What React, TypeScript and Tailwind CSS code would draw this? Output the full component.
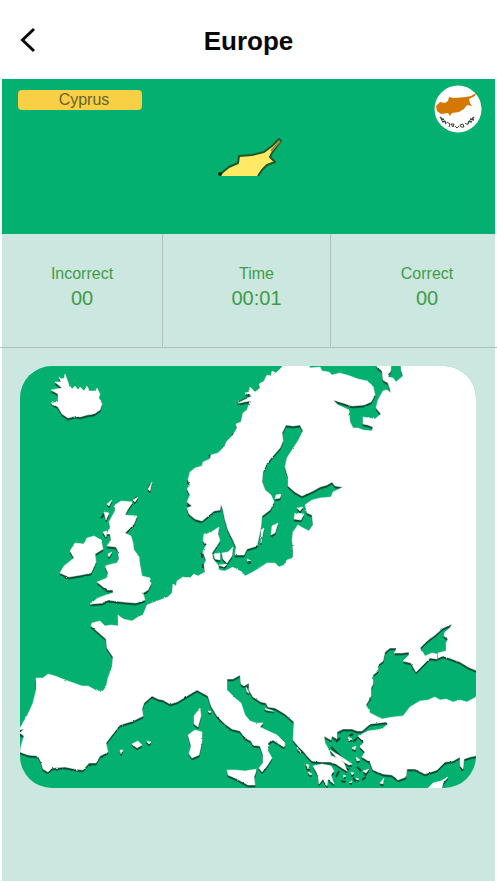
const MAINLAND =
  "M283 360 L282 367 L279 370 L276 373 L272 371 L271 376 L267 375 L264 381 L259 384 L260 388 L255 392 L250 387 L249 392 L245 393 L252 396 L238 403 L250 401 L247 410 L243 413 L241 422 L236 424 L237 428 L233 435 L227 441 L224 447 L218 453 L211 455 L210 459 L203 462 L202 466 L195 468 L190 472 L188 480 L190 485 L187 489 L190 495 L187 502 L192 506 L187 508 L189 514 L195 519 L202 521 L208 516 L214 511 L220 510 L221 504 L223 510 L225 520 L228 530 L233 540 L236 547 L235 555 L244 555 L247 549 L257 546 L259 537 L261 527 L262 516 L270 510 L274 502 L271 495 L265 490 L262 482 L263 472 L267 463 L273 456 L280 448 L283 441 L282 433 L286 425 L293 426 L300 425 L303 431 L298 441 L292 450 L287 458 L285 467 L288 477 L288 486 L295 492 L302 496 L313 491 L320 487 L327 485 L332 482 L335 486 L343 487 L337 490 L333 492 L331 497 L320 498 L312 500 L305 505 L307 513 L312 515 L313 525 L309 531 L303 528 L298 525 L293 532 L292 540 L293 550 L293 558 L287 560 L284 565 L279 567 L275 563 L267 563 L258 569 L251 573 L245 576 L242 572 L238 570 L233 567 L225 571 L219 570 L218 565 L213 559 L212 553 L216 547 L220 541 L218 534 L219 527 L210 533 L204 534 L203 541 L206 545 L203 552 L206 560 L204 565 L205 572 L198 576 L194 574 L190 578 L183 577 L177 581 L176 586 L173 584 L172 593 L168 597 L160 600 L147 605 L143 615 L138 617 L132 621 L123 619 L118 615 L118 626 L111 625 L105 626 L100 621 L92 623 L91 626 L98 632 L106 639 L107 648 L113 657 L112 667 L108 678 L106 687 L103 691 L97 691 L88 686 L82 686 L68 681 L55 676 L48 674 L43 678 L36 678 L36 690 L33 703 L28 714 L20 728 L15 728 L15 731 L24 729 L20 733 L24 736 L21 746 L20 752 L28 755 L38 756 L41 762 L43 769 L48 772 L52 768 L65 767 L75 769 L83 770 L89 763 L96 763 L100 756 L108 752 L106 743 L112 735 L120 725 L133 721 L143 716 L142 709 L144 703 L152 696 L158 699 L163 700 L170 704 L177 702 L187 696 L197 690 L208 696 L211 706 L217 716 L225 724 L232 729 L240 731 L245 738 L251 741 L253 745 L260 746 L263 755 L263 763 L259 768 L262 772 L267 766 L272 758 L268 751 L268 743 L273 740 L279 744 L284 747 L285 743 L277 735 L266 730 L260 727 L263 723 L256 723 L250 721 L245 715 L241 703 L236 699 L227 690 L227 679 L233 679 L240 675 L241 684 L244 686 L249 683 L249 690 L253 697 L261 702 L266 703 L268 707 L275 708 L285 714 L294 722 L293 740 L298 746 L304 752 L308 757 L312 761 L322 762 L330 762 L336 764 L342 768 L347 771 L344 763 L338 758 L331 756 L329 750 L325 743 L324 736 L331 740 L332 736 L337 739 L337 732 L343 729 L352 729 L357 731 L362 731 L370 724 L386 722 L388 724 L382 729 L368 731 L358 736 L364 742 L360 747 L365 752 L362 757 L370 762 L373 770 L383 774 L392 775 L398 780 L406 777 L407 769 L415 769 L425 774 L437 770 L445 762 L453 761 L460 757 L460 766 L463 769 L464 759 L470 757 L480 755 L480 697 L476 697 L467 702 L460 700 L453 702 L446 699 L440 700 L435 697 L428 700 L420 701 L410 707 L403 716 L393 717 L382 719 L370 713 L366 705 L371 696 L371 688 L373 684 L373 675 L378 671 L378 665 L383 661 L385 652 L390 648 L397 648 L394 653 L402 653 L409 652 L409 655 L403 661 L411 663 L416 672 L423 665 L430 658 L437 659 L437 654 L432 653 L425 656 L420 648 L427 641 L435 635 L443 628 L452 624 L450 628 L445 632 L444 636 L448 639 L446 643 L446 651 L438 653 L438 658 L443 656 L452 659 L460 662 L468 667 L480 672 L480 360 L401 360 L401 370 L403 376 L396 382 L393 378 L388 377 L391 370 L391 360 L377 360 L377 367 L382 371 L383 380 L388 383 L391 393 L387 390 L383 391 L378 400 L376 408 L381 414 L375 419 L363 417 L363 424 L368 425 L373 427 L372 431 L363 430 L358 428 L353 428 L350 422 L349 410 L338 405 L333 400 L343 403 L352 406 L364 405 L371 402 L375 395 L373 386 L367 381 L358 379 L350 376 L340 373 L332 375 L329 372 L322 371 L320 367 L310 368 L308 360 Z";

const ISLANDS = [
  // Iceland
  "M62 388 L55 382 L61 382 L59 377 L64 379 L65 374 L69 385 L72 389 L75 386 L78 390 L80 387 L84 391 L87 386 L89 391 L96 391 L97 388 L100 394 L99 398 L102 404 L100 410 L94 414 L87 415 L80 417 L76 416 L68 418 L62 414 L58 407 L51 403 L58 402 L58 394 L51 390 Z",
  // Great Britain
  "M121 501 L133 502 L128 509 L125 515 L137 516 L134 524 L125 533 L131 536 L133 543 L134 550 L139 557 L140 565 L142 576 L150 578 L151 584 L148 590 L143 593 L145 600 L136 603 L124 602 L115 601 L108 600 L103 603 L90 604 L98 598 L106 595 L113 593 L113 590 L107 590 L97 582 L107 578 L108 573 L105 566 L112 564 L117 563 L119 559 L118 551 L116 547 L107 546 L111 540 L110 534 L107 534 L110 527 L109 522 L115 511 L115 505 Z",
  // Ireland
  "M87 538 L94 536 L101 540 L103 549 L95 554 L96 562 L91 573 L81 575 L69 577 L60 573 L64 566 L74 558 L70 551 L75 543 L84 544 Z",
  // Hebrides, Man and the northern isles
  "M107 504 L112 500 L109 506 Z",
  "M104 512 L109 513 L106 520 Z",
  "M103 532 L107 531 L106 537 Z",
  "M108 554 L112 552 L109 557 Z",
  "M133 500 L138 497 L135 502 Z",
  "M148 489 L152 482 L150 491 Z",
  // Danish isles
  "M214 554 L220 553 L220 560 L215 559 Z",
  "M222 553 L228 552 L233 547 L232 556 L227 563 L223 559 Z",
  "M219 565 L227 564 L224 567 Z",
  "M247 559 L251 561 L248 562 Z",
  // Baltic isles
  "M272 526 L278 523 L275 533 L271 535 Z",
  "M261 530 L264 528 L261 543 Z",
  "M295 513 L304 514 L301 520 L294 519 Z",
  "M297 508 L303 507 L300 511 Z",
  "M276 495 L281 494 L280 498 L275 499 Z",
  // Corsica, Sardinia and Sicily
  "M194 716 L200 708 L201 716 L198 727 L194 724 Z",
  "M188 735 L195 730 L202 732 L202 742 L199 755 L192 758 L189 754 L191 746 Z",
  "M227 770 L235 770 L245 771 L257 769 L254 777 L255 785 L248 785 L237 779 L228 775 Z",
  "M208 711 L211 711 L210 713 Z",
  // Balearics
  "M132 744 L138 741 L142 745 L137 748 Z",
  "M146 741 L151 742 L149 744 Z",
  "M120 750 L123 750 L121 754 Z",
  // Peloponnese
  "M313 766 L322 764 L331 766 L334 771 L331 775 L334 784 L328 779 L327 786 L323 779 L319 784 L318 775 Z",
  // Ionian and Aegean isles
  "M297 747 L301 752 L298 750 Z",
  "M306 764 L309 765 L308 769 Z",
  "M308 772 L312 774 L310 775 Z",
  "M330 750 L340 756 L352 764 L349 765 L337 758 Z",
  "M348 737 L352 739 L349 740 Z",
  "M352 748 L356 746 L355 750 Z",
  "M356 757 L360 760 L357 761 Z",
  "M343 775 L346 776 L344 777 Z",
  "M351 772 L354 773 L352 775 Z",
  "M356 778 L359 779 L357 780 Z",
  "M349 781 L352 781 L351 783 Z",
  "M363 771 L369 769 L366 773 Z",
  "M380 783 L384 778 L383 784 Z",
  // Dalmatian isles
  "M246 687 L249 693 L247 692 Z",
  "M264 708 L274 711 L266 710 Z",
  // Cyprus
  "M427 789 L433 783 L441 781 L448 777 L443 783 L442 788 Z",
].join(" ");

// Narrow dark marks along the broken shores
const SHORE_MARKS =
  "M238 403 L247 398 M265 386 L262 390 M277 375 L280 377 M241 423 L244 425 M232 434 L235 437 M227 441 L231 443 M203 465 L206 467 M209 455 L212 459 M188 480 V484 M187 490 L190 492 M187 505 L191 508 M202 553 V558 M203 564 V568 M148 489 L151 484 M133 501 L137 497 M104 513 L108 519 M101 518 L104 515 M20 735 L24 737 M250 408 L248 411 M114 661 L114 664 M175 590 L179 587 M170 597 L174 595 M36 681 V690 M331 747 L341 757 M336 742 L340 738 M349 736 L353 734 M353 742 L360 736 M362 747 L366 743 M344 767 L349 770 M357 767 L361 771 M365 776 L369 769 M339 771 L336 777 M341 781 L345 782 M353 778 L356 782 M362 780 L366 777 M298 748 L303 753 M306 766 L309 771 M246 688 L250 686";

const stats = [
  { label: "Incorrect", value: "00", className: "" },
  { label: "Time", value: "00:01", className: "border-l pl-5" },
  { label: "Correct", value: "00", className: "border-l pl-7" },
];

function EuropeMap() {
  return (
    <svg
      viewBox="20 366 456 422"
      className="block w-full rounded-[32px] bg-[#03b070]"
      role="img"
      aria-label="Map of Europe"
    >
      <defs>
        <filter id="coast" x="-5%" y="-5%" width="110%" height="110%">
          <feTurbulence type="fractalNoise" baseFrequency="0.25" numOctaves="2" seed="4" />
          <feDisplacementMap in="SourceGraphic" scale="2" xChannelSelector="R" yChannelSelector="G" />
        </filter>
      </defs>
      <g filter="url(#coast)">
        <g transform="translate(0 2)" fill="#0b4a33" stroke="#0b4a33" strokeWidth="0.6">
          <path d={MAINLAND} />
          <path d={ISLANDS} />
        </g>
        <path d={SHORE_MARKS} fill="none" stroke="#0b4a33" strokeWidth="2" />
        <path d={MAINLAND} fill="#fff" stroke="#fff" strokeWidth="0.5" />
        <path d={ISLANDS} fill="#fff" stroke="#fff" strokeWidth="0.5" />
      </g>
    </svg>
  );
}

function CountryShape() {
  return (
    <svg width="66" height="42" viewBox="218 137 66 42" role="img" aria-label="Outline of Cyprus">
      <path
        d="M222 177 L228 169 L239 164 L240 157 L253 156 L265 153 L273 147 L281 140 L282 143 L273 154 L271 159 L275 163 L268 166 L263 171 L259 177 Z"
        fill="#ffea66"
      />
      <path
        d="M221 175 L225 172 L230 168 L239 164 L240 157 L253 156 L265 153 L273 147 L280 140 L282 142 L273 154 L271 158 L276 163 L268 166 L263 171 L259 177"
        fill="none"
        stroke="#21552b"
        strokeWidth="2"
        strokeLinejoin="round"
      />
      <path d="M272 152 L281 142" stroke="#9b8a3d" strokeWidth="2" />
      <circle cx="221" cy="175" r="2" fill="#0d2d1a" />
    </svg>
  );
}

function CyprusFlag() {
  return (
    <svg width="48" height="48" viewBox="434 85 48 48" role="img" aria-label="Flag of Cyprus">
      <circle cx="458" cy="109" r="23.5" fill="#fff" />
      <path
        d="M436 106 L440 102 L445 103 L448 101 L449 97 L454 98 L466 97 L471 96 L476 93 L475 96 L469 99 L470 103 L472 106 L467 105 L464 109 L459 112 L452 113 L450 116 L448 113 L441 114 L437 111 Z"
        fill="#d57800"
      />
      <g fill="none" stroke="#3d4336">
        <path d="M440 117 L442 119 M441 120 L444 119 M442 122 L445 121 M445 121 L446 124 M474 117 L472 119 M474 120 L470 119 M472 122 L469 121 M469 121 L468 124" strokeWidth="1.5" />
        <path d="M447 122 L450 124 L449 127 M451 124 L454 124 L453 127 Z M455 126 L457 128 L459 126 M460 125 L463 124 L464 127 L461 127 Z M465 123 L468 125" strokeWidth="1" />
      </g>
    </svg>
  );
}

export default function App() {
  return (
    <div className="flex min-h-screen flex-col bg-white pb-[2px] font-['Liberation_Sans',Arial,sans-serif]">
      <header className="grid h-[79px] grid-cols-[1fr_auto_1fr] items-center px-5">
        <button type="button" aria-label="Back" className="w-4">
          <svg width="16" height="26" viewBox="0 0 16 26" fill="none" stroke="#0a0a0a" strokeWidth="3">
            <path d="M14 2 L2.5 13 L14 24" />
          </svg>
        </button>
        <h1 className="pt-1 text-[26px] font-bold text-[#080808]">Europe</h1>
      </header>

      {/* Country to place */}
      <section className="mx-[2px] grid h-[155px] grid-cols-[1fr_auto_1fr] bg-[#03b070] pr-[13px] pl-4">
        <div className="mt-[11px] h-5 w-[124px] rounded bg-[#f8cf45] pl-2 text-center text-base leading-5 text-[#69632f]">
          Cyprus
        </div>
        <div className="self-center">
          <CountryShape />
        </div>
        <div className="mt-1.5 justify-self-end">
          <CyprusFlag />
        </div>
      </section>

      {/* Score */}
      <section className="border-b border-[#afbfb9]">
        <dl className="mx-[2px] grid h-[113px] grid-cols-[160fr_168fr_165fr] bg-[#cce7e0] text-center text-[#3f9c46]">
          {stats.map((stat) => (
            <div key={stat.label} className={`border-[#afbfb9] pt-[30px] ${stat.className}`}>
              <dt className="text-base leading-5">{stat.label}</dt>
              <dd className="text-xl leading-7">{stat.value}</dd>
            </div>
          ))}
        </dl>
      </section>

      <main className="mx-[2px] flex-1 bg-[#cce7e0] pt-[18px] pr-[19px] pl-[18px]">
        <EuropeMap />
      </main>
    </div>
  );
}
